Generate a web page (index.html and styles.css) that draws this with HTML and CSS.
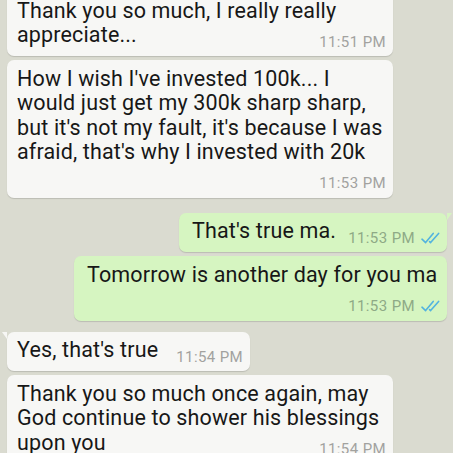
FILE: index.html
```html
<!DOCTYPE html>
<html lang="en">
<head>
    <meta charset="UTF-8">
    <meta name="viewport" content="width=device-width, initial-scale=1.0">
    <title>Chat</title>
    <link rel="stylesheet" href="styles.css">
</head>
<body>
    <div class="chat">
        <div class="msg in">
            <span class="text">Thank you so much, I really really appreciate...</span>
            <span class="meta"><span class="time">11:51 PM</span></span>
        </div>
        <div class="msg in">
            <span class="text">How I wish I've invested 100k... I would just get my 300k sharp sharp, but it's not my fault, it's because I was afraid, that's why I invested with 20k</span>
            <span class="meta"><span class="time">11:53 PM</span></span>
        </div>

        <div class="msg out first">
            <span class="text">That's true ma.</span>
            <span class="meta">
                <span class="time">11:53 PM</span>
                <svg class="ticks" width="20" height="12" viewBox="0 0 20 12"><path d="M1 7.2 L4.6 10.6 L12.2 1.4 M8.6 9.6 L9.6 10.6 L17.6 1.4"/></svg>
            </span>
        </div>
        <div class="msg out">
            <span class="text">Tomorrow is another day for you ma</span>
            <span class="meta">
                <span class="time">11:53 PM</span>
                <svg class="ticks" width="20" height="12" viewBox="0 0 20 12"><path d="M1 7.2 L4.6 10.6 L12.2 1.4 M8.6 9.6 L9.6 10.6 L17.6 1.4"/></svg>
            </span>
        </div>

        <div class="msg in first">
            <span class="text">Yes, that's true</span>
            <span class="meta"><span class="time">11:54 PM</span></span>
        </div>
        <div class="msg in">
            <span class="text">Thank you so much once again, may God continue to shower his blessings upon you</span>
            <span class="meta"><span class="time">11:54 PM</span></span>
        </div>
    </div>
</body>
</html>
```

FILE: styles.css
```css
* {
    box-sizing: border-box;
}
body {
    margin: 0;
    height: 453px;
    overflow: hidden;
    background-color: #dadbd0;
    font-family: Roboto, "Noto Sans", sans-serif;
    color: #171717;
}
.chat {
    display: flex;
    flex-direction: column;
    padding: 0 6px 0 7px;
    margin-top: -8px;
}
.msg {
    position: relative;
    border-radius: 7px;
    font-size: 21.5px;
    letter-spacing: 0.15px;
    line-height: 24.6px;
    box-shadow: 0 1px 1px rgba(0, 0, 0, 0.14);
}
.msg + .msg {
    margin-top: 4px;
}
.in + .out {
    margin-top: 15px;
}
.out + .in {
    margin-top: 11px;
}
.in {
    align-self: flex-start;
    max-width: 386px;
    background-color: #f7f7f5;
    padding: 6.5px 7px 6.5px 10px;
}
.out {
    align-self: flex-end;
    max-width: 373px;
    background-color: #d6f5c1;
    padding: 6.5px 6px 6.5px 13px;
}
/* little tail on the first bubble of a group */
.in.first::before,
.out.first::before {
    content: "";
    position: absolute;
    top: 0;
    width: 0;
    height: 0;
    border-top: 7px solid;
}
.in.first::before {
    left: -5px;
    border-left: 5px solid transparent;
    border-top-color: #f7f7f5;
}
.out.first::before {
    right: -5px;
    border-right: 5px solid transparent;
    border-top-color: #d6f5c1;
}
.meta {
    float: right;
    display: flex;
    align-items: center;
    gap: 6px;
    margin: 10.5px 0 0 18px;
    font-size: 15px;
    letter-spacing: 0.4px;
    line-height: 16px;
    color: #a2a29f;
}
.out .meta {
    margin-left: 12px;
    color: #8eaa86;
}
.ticks {
    fill: none;
    stroke: #52b3df;
    stroke-width: 1.6;
    stroke-linecap: round;
    stroke-linejoin: round;
}
```
